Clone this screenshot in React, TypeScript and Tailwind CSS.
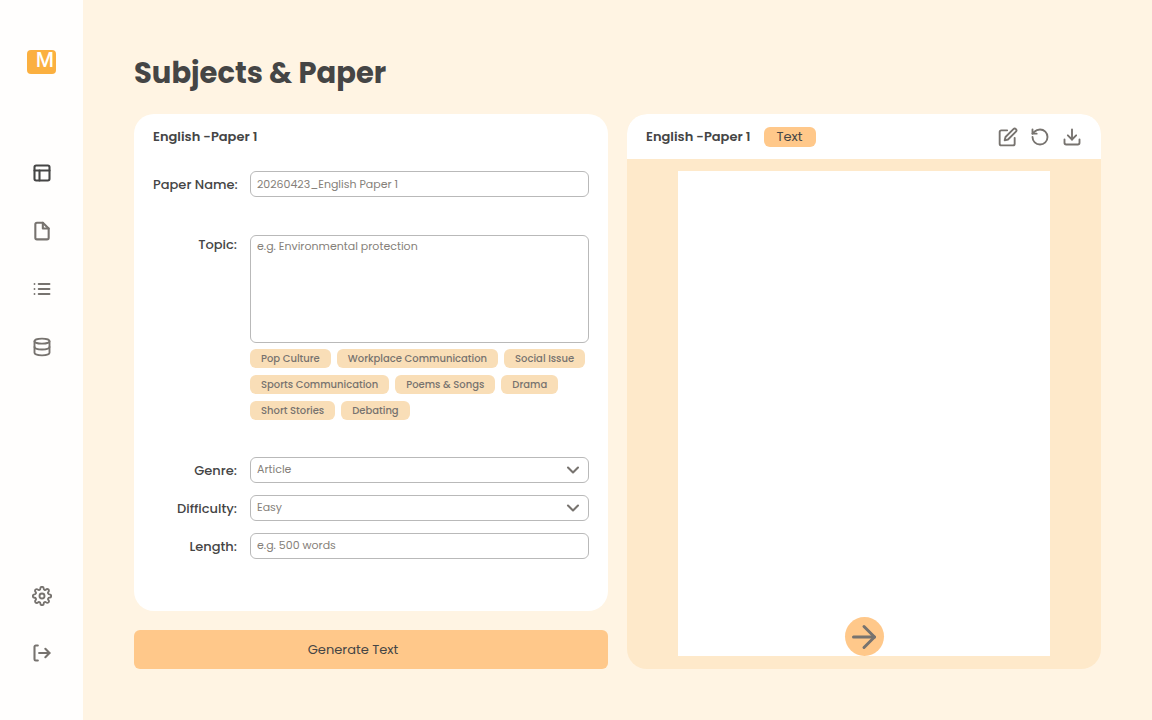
import { FiDatabase, FiEdit, FiFile, FiLayout, FiList, FiSettings } from 'react-icons/fi';
import { ArrowRight, ChevronDown, Download, RotateCcw } from 'lucide-react';

const topics = [
  'Pop Culture',
  'Workplace Communication',
  'Social Issue',
  'Sports Communication',
  'Poems & Songs',
  'Drama',
  'Short Stories',
  'Debating',
];

const fieldClass =
  'block w-full h-[26px] rounded-md border border-[#b9b9b9] bg-white px-1.5 text-[11px] text-[#858079] placeholder:text-[#858079] outline-none';
const labelClass = 'text-right text-[13px] font-medium whitespace-nowrap';

function LogoutIcon() {
  return (
    <svg width="20" height="20" viewBox="0 0 24 24" fill="none" stroke="currentColor" strokeWidth="2.5" strokeLinecap="round" strokeLinejoin="round">
      <path d="M7 3H4.500A1.500 1.500 0 0 0 3 4.500v15A1.500 1.500 0 0 0 4.500 21H7" />
      <path d="M8.500 12H21" />
      <path d="m16 7 5 5-5 5" />
    </svg>
  );
}

function Sidebar() {
  const links = [
    { label: 'Dashboard', icon: <FiLayout size={20} strokeWidth={2.5} />, color: 'text-[#454545]' },
    { label: 'Papers', icon: <FiFile size={20} strokeWidth={2.5} />, color: 'text-[#77736f]' },
    { label: 'List', icon: <FiList size={20} strokeWidth={2.25} />, color: 'text-[#77736f]' },
    { label: 'Database', icon: <FiDatabase size={20} strokeWidth={2.25} />, color: 'text-[#77736f]' },
  ];

  return (
    <aside className="flex w-[83px] shrink-0 flex-col items-center bg-[#fffefd] pt-[50px] pb-[57px]">
      {/* Logo */}
      <div className="flex h-6 w-[29px] items-start justify-end rounded bg-[#fbb040] pr-0.5 font-['Inter',sans-serif] text-xl leading-5 font-medium text-white">M</div>

      <nav className="mt-[89px] flex flex-col gap-[38px]">
        {links.map((link) => (
          <a key={link.label} href="#" aria-label={link.label} className={link.color}>
            {link.icon}
          </a>
        ))}
      </nav>

      <nav className="mt-auto flex flex-col items-center gap-[37px] text-[#77736f]">
        <a href="#" aria-label="Settings">
          <FiSettings size={20} strokeWidth={2.25} />
        </a>
        <a href="#" aria-label="Log out">
          <LogoutIcon />
        </a>
      </nav>
    </aside>
  );
}

function SelectField({ id, options }: { id: string; options: string[] }) {
  return (
    <div className="relative">
      <select id={id} className={`${fieldClass} appearance-none pb-0.5`}>
        {options.map((option) => (
          <option key={option}>{option}</option>
        ))}
      </select>
      <ChevronDown size={20} strokeWidth={2.5} className="pointer-events-none absolute top-[3px] right-1.5 text-[#77736f]" />
    </div>
  );
}

function PaperForm() {
  return (
    <form id="paper-form" className="flex-1 rounded-[20px] bg-white px-[19px] pt-[13px]">
      <h2 className="text-[13px] leading-5 font-semibold">English -Paper 1</h2>

      <div className="mt-6 grid grid-cols-[84px_minmax(0,1fr)] gap-x-[13px]">
        <label htmlFor="name" className={`${labelClass} leading-7`}>Paper Name:</label>
        <input id="name" className={fieldClass} defaultValue="20260423_English Paper 1" />

        <label htmlFor="topic" className={`${labelClass} mt-9 leading-5`}>Topic:</label>
        <div className="mt-9">
          <textarea
            id="topic"
            placeholder="e.g. Environmental protection"
            className="block h-[108px] w-full resize-none rounded-md border border-[#b9b9b9] bg-white px-1.5 py-0.5 text-[11px] leading-4 text-[#858079] outline-none placeholder:text-[#858079]"
          />
          {/* Topic suggestions */}
          <div className="mt-1.5 flex flex-wrap gap-x-1.5 gap-y-[7px]">
            {topics.map((topic) => (
              <button key={topic} type="button" className="h-[19px] rounded-md bg-[#f9deb7] px-[11px] text-[10px] leading-4 font-medium text-[#77736f]">
                {topic}
              </button>
            ))}
          </div>
        </div>
      </div>

      <div className="mt-[37px] grid grid-cols-[84px_minmax(0,1fr)] gap-x-[13px] gap-y-2.5">
        <label htmlFor="genre" className={`${labelClass} leading-7`}>Genre:</label>
        <SelectField id="genre" options={['Article', 'Letter', 'Report']} />

        <label htmlFor="difficulty" className={`${labelClass} leading-7`}>Difficulty:</label>
        <SelectField id="difficulty" options={['Easy', 'Medium', 'Hard']} />

        <label htmlFor="length" className={`${labelClass} leading-7`}>Length:</label>
        <input id="length" className={`${fieldClass} pb-0.5`} placeholder="e.g. 500 words" />
      </div>
    </form>
  );
}

function Preview() {
  return (
    <section className="flex flex-col overflow-hidden rounded-[20px] bg-[#fee9ca]">
      <header className="flex h-[45px] items-center bg-white px-[19px]">
        <h2 className="text-[13px] leading-5 font-semibold">English -Paper 1</h2>
        <span className="ml-[13px] rounded-md bg-[#ffc88a] px-[13px] text-[13px] leading-5">Text</span>
        <div className="ml-auto flex items-center gap-3 text-[#77736f]">
          <button type="button" aria-label="Edit">
            <FiEdit size={20} strokeWidth={2.25} />
          </button>
          <button type="button" aria-label="Regenerate">
            <RotateCcw size={20} strokeWidth={2.25} />
          </button>
          <button type="button" aria-label="Download">
            <Download size={20} strokeWidth={2.25} />
          </button>
        </div>
      </header>

      {/* Page */}
      <div className="flex flex-1 px-[51px] pt-3 pb-[13px]">
        <div className="flex flex-1 items-end justify-center bg-white">
          <button type="button" aria-label="Next" className="flex size-[39px] items-center justify-center rounded-full bg-[#ffc88a] text-[#77736f]">
            <ArrowRight size={36} strokeWidth={2} />
          </button>
        </div>
      </div>
    </section>
  );
}

export default function App() {
  return (
    <div className="flex min-h-screen bg-[#fff4e3] font-['Poppins','Inter',sans-serif] text-[#454545]">
      <Sidebar />
      <main className="flex min-w-0 flex-1 flex-col px-[51px] pt-[53px] pb-[51px]">
        <h1 className="text-[29px] leading-10 font-bold">Subjects &amp; Paper</h1>

        <div className="mt-[21px] grid flex-1 grid-cols-2 gap-[19px]">
          <div className="flex flex-col gap-[19px]">
            <PaperForm />
            <button type="submit" form="paper-form" className="h-[39px] rounded-md bg-[#ffc88a] pr-9 text-[13px]">
              Generate Text
            </button>
          </div>
          <Preview />
        </div>
      </main>
    </div>
  );
}
